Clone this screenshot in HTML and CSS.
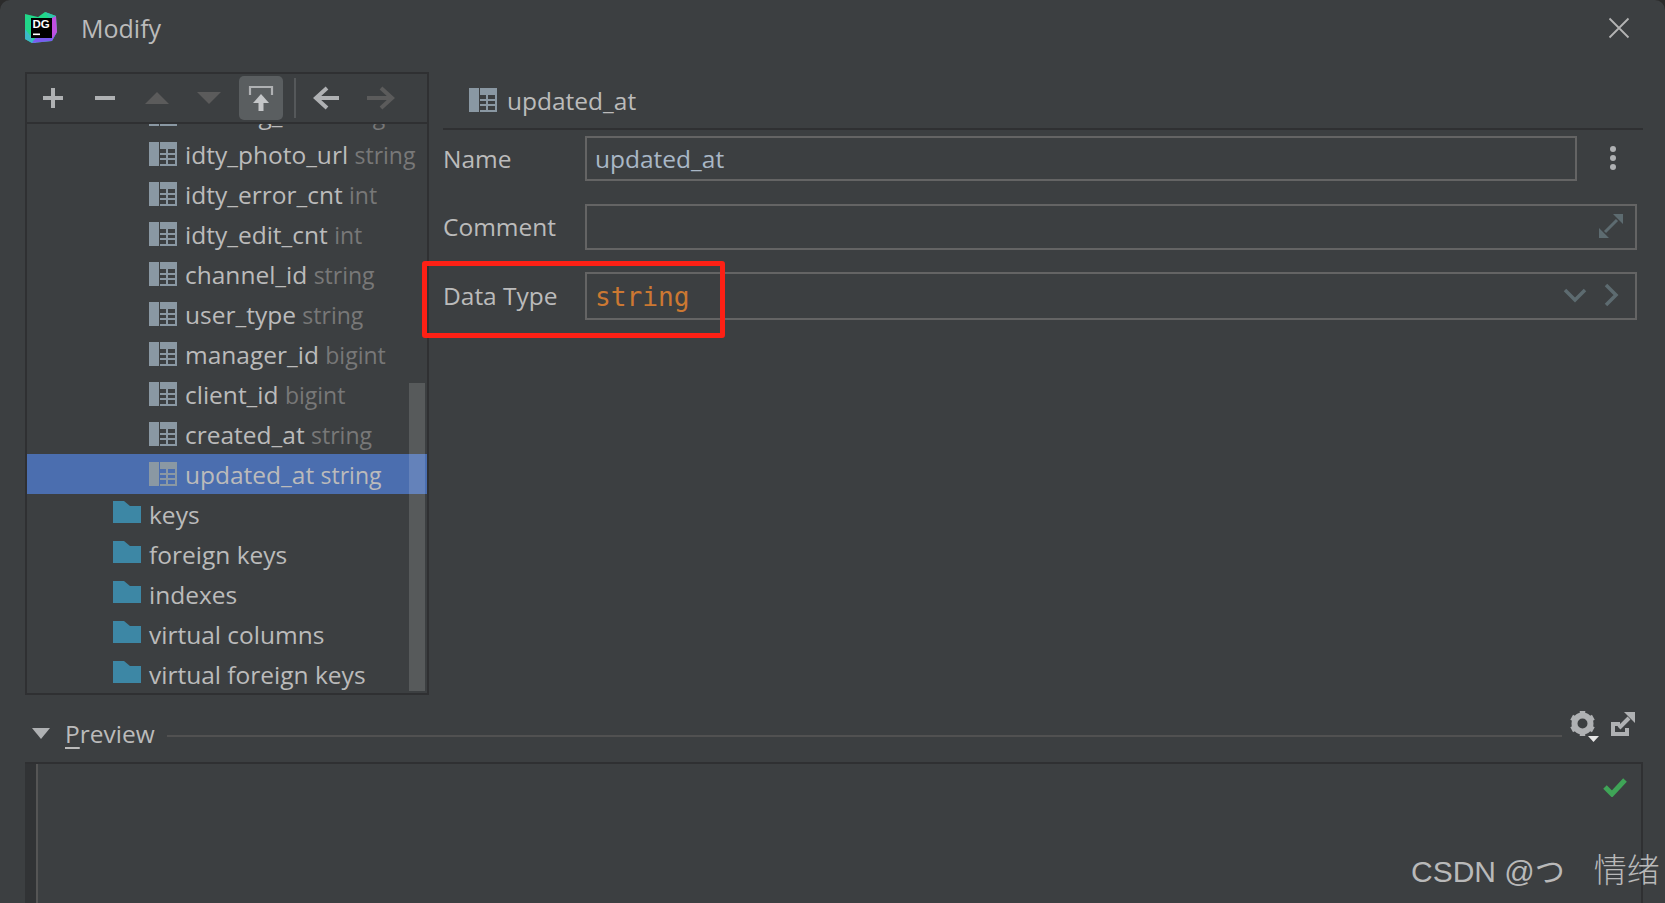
FILE: index.html
```html
<!DOCTYPE html>
<html lang="en">
<head>
<meta charset="utf-8">
<title>Modify</title>
<link rel="stylesheet" href="styles.css">
</head>
<body>
<svg class="defs" width="0" height="0">
  <defs>
    <g id="col" fill="#8a98a3">
      <path d="M0 0h10v24H0z"/>
      <path fill-rule="evenodd" d="M11 0h17v24H11zM11 7v4h6V7zm8 0v4h7V7zM11 13v3h6v-3zm8 0v3h7v-3zM11 18v4h6v-4zm8 0v4h7v-4z"/>
    </g>
    <path id="folder" d="M0 0h11l6 5h11v17H0z" fill="#3d87a5"/>
  </defs>
</svg>
<div class="win">
  <header class="title">
    <svg class="logo" width="34" height="34" viewBox="0 0 34 34">
      <path d="M1 3l13 3 7-5 11 4 1 16-5 9-20 2-7-4z" fill="#21d789"/>
      <path d="M1 18l11 14-4 0-7-4z" fill="#3bb8c8"/>
      <path d="M12 26h16l5-5-5 9-20 2z" fill="#7a5cf0"/>
      <path d="M26 6l6-1 1 16-5 7z" fill="#c04fe0"/>
      <path d="M21 1l11 4-6 3z" fill="#2fc4a8"/>
      <rect x="7" y="7" width="21" height="20" fill="#000"/>
      <text x="8.500" y="17" class="logo-t">DG</text>
      <rect x="9" y="22.500" width="7" height="1.600" fill="#fff"/>
    </svg>
    <span class="title-t">Modify</span>
    <svg class="close" width="22" height="22" viewBox="0 0 22 22"><path d="M1.500 1.500l19 19M20.500 1.500l-19 19" stroke="#b4b4b4" stroke-width="1.800" fill="none"/></svg>
  </header>

  <main class="split">
    <aside class="left">
      <div class="toolbar">
        <svg class="ti" width="52" height="40" viewBox="0 0 52 40"><path d="M16 20h20M26 10v20" stroke="#afb1b3" stroke-width="4" fill="none"/></svg>
        <svg class="ti" width="52" height="40" viewBox="0 0 52 40"><path d="M16 20h20" stroke="#afb1b3" stroke-width="4" fill="none"/></svg>
        <svg class="ti" width="52" height="40" viewBox="0 0 52 40"><path d="M14 26l12-12 12 12z" fill="#5b5b5b"/></svg>
        <svg class="ti" width="52" height="40" viewBox="0 0 52 40"><path d="M14 14h24L26 26z" fill="#5b5b5b"/></svg>
        <span class="ti-on">
          <svg width="44" height="44" viewBox="0 0 44 44"><path d="M11 19v-8h22v8" stroke="#afb1b3" stroke-width="2.200" fill="none"/><path d="M22 18l8 9H14z" fill="#c4c6c8"/><path d="M19.500 27h5v8h-5z" fill="#c4c6c8"/></svg>
        </span>
        <span class="ti-sep"></span>
        <svg class="ti" width="52" height="40" viewBox="0 0 52 40"><path d="M41 20H19M29 10L18 20l11 10" stroke="#afb1b3" stroke-width="4" fill="none"/></svg>
        <svg class="ti" width="52" height="40" viewBox="0 0 52 40"><path d="M17 20h25M31 10l11 10-11 10" stroke="#5b5b5b" stroke-width="4" fill="none"/></svg>
      </div>
      <div class="tree">
        <ul class="rows">
          <li class="row col"><svg class="ic" width="28" height="24"><use href="#col"/></svg><span>missing_cnt <em>string</em></span></li>
          <li class="row col"><svg class="ic" width="28" height="24"><use href="#col"/></svg><span>idty_photo_url <em>string</em></span></li>
          <li class="row col"><svg class="ic" width="28" height="24"><use href="#col"/></svg><span>idty_error_cnt <em>int</em></span></li>
          <li class="row col"><svg class="ic" width="28" height="24"><use href="#col"/></svg><span>idty_edit_cnt <em>int</em></span></li>
          <li class="row col"><svg class="ic" width="28" height="24"><use href="#col"/></svg><span>channel_id <em>string</em></span></li>
          <li class="row col"><svg class="ic" width="28" height="24"><use href="#col"/></svg><span>user_type <em>string</em></span></li>
          <li class="row col"><svg class="ic" width="28" height="24"><use href="#col"/></svg><span>manager_id <em>bigint</em></span></li>
          <li class="row col"><svg class="ic" width="28" height="24"><use href="#col"/></svg><span>client_id <em>bigint</em></span></li>
          <li class="row col"><svg class="ic" width="28" height="24"><use href="#col"/></svg><span>created_at <em>string</em></span></li>
          <li class="row col sel"><svg class="ic" width="28" height="24"><use href="#col"/></svg><span>updated_at <em>string</em></span></li>
          <li class="row dir"><svg class="ic" width="28" height="22"><use href="#folder"/></svg><span>keys</span></li>
          <li class="row dir"><svg class="ic" width="28" height="22"><use href="#folder"/></svg><span>foreign keys</span></li>
          <li class="row dir"><svg class="ic" width="28" height="22"><use href="#folder"/></svg><span>indexes</span></li>
          <li class="row dir"><svg class="ic" width="28" height="22"><use href="#folder"/></svg><span>virtual columns</span></li>
          <li class="row dir"><svg class="ic" width="28" height="22"><use href="#folder"/></svg><span>virtual foreign keys</span></li>
        </ul>
        <div class="thumb"></div>
      </div>
    </aside>

    <section class="right">
      <div class="head">
        <svg class="ic" width="28" height="24"><use href="#col"/></svg>
        <span>updated_at</span>
      </div>
      <div class="form">
        <label class="lbl">Name</label>
        <div class="name-wrap">
          <div class="field f-name"><span class="val">updated_at</span></div>
          <svg class="dots" width="8" height="24" viewBox="0 0 8 24"><circle cx="4" cy="3" r="3" fill="#afb1b3"/><circle cx="4" cy="12" r="3" fill="#afb1b3"/><circle cx="4" cy="21" r="3" fill="#afb1b3"/></svg>
        </div>
        <label class="lbl">Comment</label>
        <div class="field f-comment">
          <svg class="expand" width="24" height="24" viewBox="0 0 24 24"><path d="M14 0h10v10zM10 24H0V14z" fill="#5d6b70"/><path d="M18 6L6 18" stroke="#5d6b70" stroke-width="3"/></svg>
        </div>
        <label class="lbl">Data Type</label>
        <div class="field f-type">
          <span class="mono">string</span>
          <div class="type-ics">
            <svg width="24" height="16" viewBox="0 0 24 16"><path d="M2 3l10 10L22 3" stroke="#5d6b70" stroke-width="3.500" fill="none"/></svg>
            <svg width="16" height="24" viewBox="0 0 16 24"><path d="M3 2l10 10L3 22" stroke="#5d6b70" stroke-width="3.500" fill="none"/></svg>
          </div>
        </div>
      </div>
    </section>
  </main>

  <section class="preview">
    <div class="pv-head">
      <svg width="18" height="11" viewBox="0 0 18 11"><path d="M0 0h18L9 11z" fill="#afb1b3"/></svg>
      <span class="pv-t"><u>P</u>review</span>
      <span class="pv-line"></span>
      <svg class="gear" width="29" height="31" viewBox="0 0 29 31">
        <circle cx="12.500" cy="12.500" r="8" fill="none" stroke="#afb1b3" stroke-width="6"/>
        <path d="M12.500 0v4M12.500 21v4M23.330 6.250L20.300 8M1.670 18.750L4.700 17M23.330 18.750L20.300 17M1.670 6.250L4.700 8" stroke="#afb1b3" stroke-width="5.500"/>
        <path d="M18 25h11l-5.500 6z" fill="#e6e6e6"/>
      </svg>
      <svg class="popout" width="24" height="24" viewBox="0 0 24 24"><path d="M9 12H2v10h14v-6" stroke="#afb1b3" stroke-width="4" fill="none"/><path d="M13 0h11v11z" fill="#afb1b3"/><path d="M18 6L8 16" stroke="#afb1b3" stroke-width="4"/></svg>
    </div>
    <div class="code">
      <div class="gutter"></div>
      <div class="editor">
        <svg width="24" height="20" viewBox="0 0 24 20"><path d="M2 10l7 7L22 3" stroke="#3fa457" stroke-width="5" fill="none"/></svg>
      </div>
    </div>
  </section>

  <div class="redbox"></div>
  <div class="mark">CSDN @つ<span class="mark-cjk">情绪</span></div>
</div>
</body>
</html>
```

FILE: styles.css
```css
* { box-sizing: border-box; }
html, body { margin: 0; height: 100%; }
body {
  background: #2b2b2b;
  overflow: hidden;
  font-family: "Open Sans", "Noto Sans", sans-serif;
  color: #bbbbbb;
}
.defs { position: absolute; }
.win {
  position: relative;
  width: 1665px;
  height: 903px;
  background: #3c3f41;
  border-radius: 10px 10px 0 0;
  overflow: hidden;
  display: flex;
  flex-direction: column;
  padding-left: 25px;
}
.title {
  height: 72px;
  flex: none;
  display: flex;
  align-items: flex-start;
  padding-top: 10px;
  margin-left: -1px;
}
.logo { flex: none; margin-top: 1px; }
.title-t { font-size: 25px; line-height: 36px; margin-left: 23px; color: #bbbbbb; }
.close { margin-left: auto; margin-right: 35px; margin-top: 7px; }

.split { display: flex; height: 623px; flex: none; }
.left {
  width: 404px;
  flex: none;
  border: 2px solid #2f3032;
  display: flex;
  flex-direction: column;
}
.toolbar {
  height: 50px;
  flex: none;
  border-bottom: 2px solid #2f3032;
  display: flex;
  align-items: center;
}
.ti { flex: none; }
.ti-on {
  width: 44px;
  height: 44px;
  background: #5a5e60;
  border-radius: 5px;
  margin-left: 4px;
  flex: none;
}
.ti-on svg { display: block; }
.ti-sep { width: 2px; height: 40px; background: #55585a; margin: 0 2px 0 11px; flex: none; }

.tree { position: relative; flex: 1; overflow: hidden; }
.rows { list-style: none; margin: -30px 0 0; padding: 0; }
.row {
  height: 40px;
  display: flex;
  align-items: center;
  font-size: 24.500px;
  white-space: nowrap;
}
.row em { font-style: normal; color: #787878; font-size: 23px; }
.row .ic { flex: none; margin-right: 8px; }
.col { padding-left: 122px; }
.dir { padding-left: 86px; }
.dir .ic { margin-bottom: 4px; }
.sel { background: #4b6eaf; }
.sel em { color: #bbbbbb; }
.thumb {
  position: absolute;
  right: 2px;
  top: 259px;
  bottom: 2px;
  width: 16px;
  background: rgba(255,255,255,0.14);
}

.right { flex: 1; padding-left: 14px; padding-right: 22px; }
.head {
  height: 58px;
  border-bottom: 2px solid #2f3032;
  display: flex;
  align-items: center;
  padding-left: 26px;
  font-size: 24.500px;
}
.head .ic { margin-right: 10px; }
.form {
  display: grid;
  grid-template-columns: 142px 1fr;
  padding-top: 6px;
  row-gap: 22px;
  padding-right: 6px;
  align-items: center;
}
.lbl { font-size: 24.500px; margin-bottom: 2px; }
.name-wrap { display: flex; align-items: center; gap: 32px; padding-right: 20px; height: 46px; }
.dots { margin-bottom: 2px; }
.field { border: 2px solid #646464; display: flex; align-items: center; padding: 0 8px; }
.f-name { flex: 1; height: 45px; align-self: flex-start; }
.f-comment { height: 46px; justify-content: flex-end; padding-right: 12px; }
.expand { margin-bottom: 2px; }
.f-type { height: 48px; justify-content: space-between; }
.val { font-size: 24.500px; color: #a9b7c6; }
.mono { font-family: "DejaVu Sans Mono", monospace; font-size: 26.200px; color: #cc7832; padding-top: 2px; }
.type-ics { display: flex; align-items: center; gap: 16px; padding-right: 8px; margin-bottom: 3px; }

.preview { flex: 1; display: flex; flex-direction: column; padding-right: 22px; }
.pv-head {
  height: 67px;
  flex: none;
  display: flex;
  align-items: center;
  padding: 10px 8px 0 7px;
}
.pv-t { font-size: 24.500px; margin-left: 15px; }
.pv-t u { text-underline-offset: 4px; }
.pv-line { flex: 1; height: 2px; background: #515151; margin: 4px 8px 0 12px; }
.gear { margin: 0 12px 14px 0; flex: none; }
.popout { margin-bottom: 19px; flex: none; }
.code {
  flex: 1;
  border-top: 2px solid #2f3032;
  border-right: 2px solid #2f3032;
  display: flex;
}
.gutter { width: 13px; flex: none; background: #313335; border-right: 2px solid #555555; }
.editor { flex: 1; display: flex; justify-content: flex-end; align-items: flex-start; padding: 13px 14px 0 0; }

.redbox {
  position: absolute;
  left: 422px;
  top: 261px;
  width: 303px;
  height: 77px;
  border: 5px solid #fd2015;
  border-radius: 3px;
}
.mark {
  position: absolute;
  left: 1411px;
  top: 848px;
  font-family: "Liberation Sans", "Noto Sans CJK JP", sans-serif;
  font-size: 30px;
  line-height: 40px;
  color: #b9b9b9;
  white-space: nowrap;
}
.mark-cjk { font-family: "Noto Sans CJK SC", sans-serif; font-size: 33px; margin-left: 29px; font-weight: 300; }
.logo-t { font: 700 11.500px "Liberation Sans", sans-serif; fill: #fff; }
```
